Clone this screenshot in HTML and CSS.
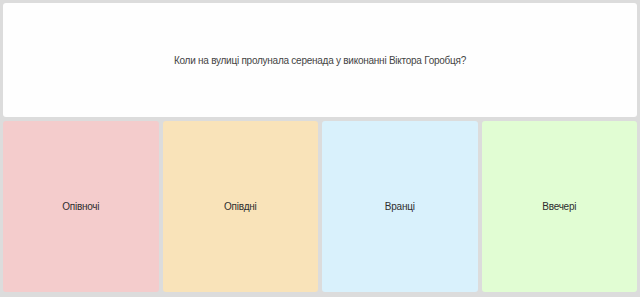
FILE: index.html
```html
<!DOCTYPE html>
<html lang="uk">
<head>
    <meta charset="UTF-8" />
    <meta name="viewport" content="width=device-width, initial-scale=1.0">
    <title>Питання</title>
    <link rel="stylesheet" href="styles.css">
</head>
<body>
    <div class="board">
        <div class="question">Коли на вулиці пролунала серенада у виконанні Віктора Горобця?</div>
        <div class="answers">
            <div class="answer red">Опівночі</div>
            <div class="answer yellow">Опівдні</div>
            <div class="answer blue">Вранці</div>
            <div class="answer green">Ввечері</div>
        </div>
    </div>
</body>
</html>
```

FILE: styles.css
```css
html, body {
    margin: 0;
    padding: 0;
    height: 100%;
}

body {
    font-family: "Liberation Sans", Arial, sans-serif;
    font-size: 10px;
    letter-spacing: -0.25px;
    color: #2e2e2e;
    background-color: #dcdcdc;
}

.board {
    height: 297px;
    box-sizing: border-box;
    padding: 3px 3px 5px 3px;
    display: flex;
    flex-direction: column;
    gap: 4px;
}

.question {
    height: 114px;
    background-color: #fefefe;
    border-radius: 3px;
    display: flex;
    align-items: center;
    justify-content: center;
    text-align: center;
    color: #444;
}

.answers {
    flex: 1;
    display: grid;
    grid-template-columns: repeat(4, 1fr);
    gap: 4px;
}

.answer {
    border-radius: 3px;
    display: flex;
    align-items: center;
    justify-content: center;
}

.red {
    background-color: #f4cccc;
}

.yellow {
    background-color: #f9e3b9;
}

.blue {
    background-color: #d9f1fc;
}

.green {
    background-color: #e1fdd3;
}
```
